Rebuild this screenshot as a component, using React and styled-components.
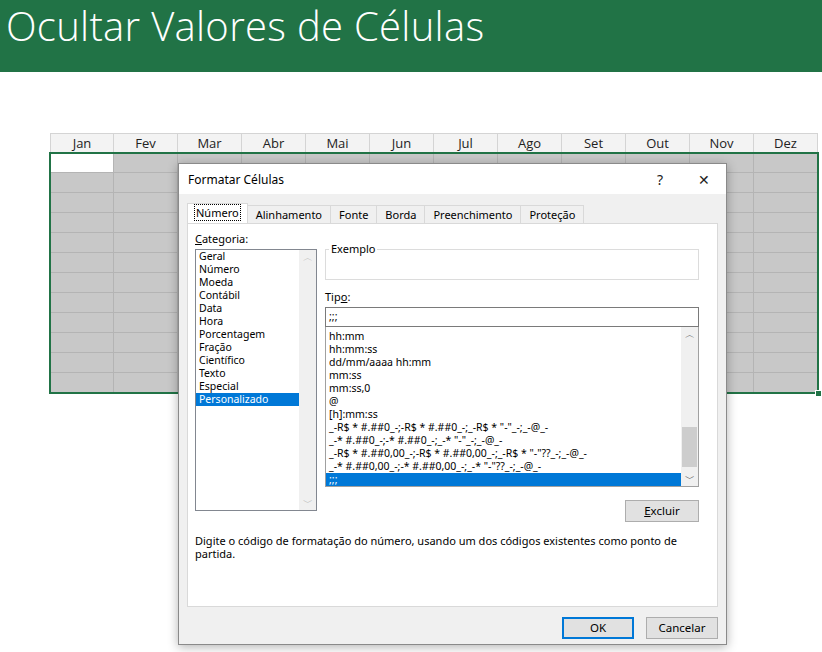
import React from "react";
import styled, { createGlobalStyle } from "styled-components";

const G = createGlobalStyle`
  body { margin:0; background:#fff; font-family:"Noto Sans", sans-serif; }
`;
const Page = styled.div`position:relative;width:822px;height:652px;overflow:hidden;background:#fff;`;
const Header = styled.div`
  height:72px;background:#217346;color:#fff;font-family:"Open Sans",sans-serif;font-weight:300;
  font-size:40px;line-height:52px;padding-left:6px;letter-spacing:0.3px;
`;
const Sheet = styled.div`margin:61px 0 0 50px;width:768px;`;
const HeadRow = styled.div`display:grid;grid-template-columns:repeat(12,64px);height:19px;background:#f3f3f3;border-top:1px solid #d4d4d4;`;
const HeadCell = styled.div`
  border-right:1px solid #d4d4d4;border-left:${p=>p.first?"1px solid #d4d4d4":"0"};
  font-size:13px;color:#222;text-align:center;line-height:19px;font-family:"Open Sans",sans-serif;
`;
const Grid = styled.div`
  display:grid;grid-template-columns:repeat(12,64px);grid-auto-rows:20px;
  outline:2px solid #217346;outline-offset:-1px;position:relative;
`;
const Cell = styled.div`
  background:${p=>p.white?"#fff":"#c8c8c8"};border-right:1px solid #b4b4b4;border-bottom:1px solid #b4b4b4;box-sizing:border-box;
`;
const Handle = styled.div`position:absolute;right:-4px;bottom:-4px;width:5px;height:5px;background:#217346;border:1px solid #fff;`;

const Dialog = styled.div`
  position:absolute;left:178px;top:163px;width:547px;height:480px;background:#f0f0f0;
  border:1px solid #8a8a8a;box-shadow:0 2px 10px rgba(0,0,0,.3);font-size:10.5px;color:#000;
  display:flex;flex-direction:column;
`;
const TitleBar = styled.div`height:30px;background:#fff;display:flex;align-items:center;padding-left:9px;font-size:12px;`;
const TitleText = styled.div`flex:1;`;
const TitleBtn = styled.div`width:44px;text-align:center;font-size:14px;color:#222;`;
const Tabs = styled.div`display:flex;margin:10px 0 0 8px;height:19px;align-items:flex-end;font-size:11px;`;
const Tab = styled.div`
  height:${p=>p.active?"20px":"18px"};padding:0 7px;line-height:18px;box-sizing:border-box;
  border:1px solid #d9d9d9;border-bottom:none;background:${p=>p.active?"#fff":"#f0f0f0"};
  margin-right:-1px;position:relative;z-index:${p=>p.active?2:1};
  span{outline:${p=>p.active?"1px dotted #000":"none"};padding:0 1px;}
`;
const Panel = styled.div`
  margin:0 8px 0 8px;height:384px;background:#fff;border:1px solid #d9d9d9;box-sizing:border-box;
  padding:8px 19px 0 7px;position:relative;
`;
const Cols = styled.div`display:grid;grid-template-columns:122px 374px;gap:8px;`;
const Label = styled.div`height:16px;line-height:14px;margin-bottom:1px;font-size:11px;u{text-decoration:underline;}`;
const ListBox = styled.div`
  border:1px solid #828790;height:262px;box-sizing:border-box;display:flex;
`;
const Items = styled.div`flex:1;padding-top:0;overflow:hidden;`;
const Item = styled.div`
  height:13px;line-height:13px;padding-left:3px;white-space:nowrap;
  background:${p=>p.sel?"#0078d7":"transparent"};color:${p=>p.sel?"#fff":"#000"};
`;
const Scroll = styled.div`width:17px;background:#f0f0f0;display:flex;flex-direction:column;justify-content:space-between;align-items:center;color:${p=>p.dim?"#bbb":"#555"};font-size:10px;position:relative;`;
const Thumb = styled.div`position:absolute;left:1px;right:1px;top:${p=>p.top}px;height:${p=>p.h}px;background:#cdcdcd;`;
const Fieldset = styled.div`
  border:1px solid #dcdcdc;height:31px;box-sizing:border-box;position:relative;margin-top:17px;
`;
const Legend = styled.span`position:absolute;top:-9px;left:3px;background:#fff;padding:0 2px;font-size:11px;`;
const Input = styled.div`border:1px solid #7a7a7a;height:20px;box-sizing:border-box;padding-left:3px;line-height:17px;`;
const Button = styled.div`
  width:${p=>p.w||72}px;height:22px;box-sizing:border-box;background:#e1e1e1;
  border:${p=>p.def?"2px solid #0078d7":"1px solid #adadad"};
  text-align:center;line-height:${p=>p.def?18:20}px;font-size:11.5px;
  u{text-decoration:underline;}
`;
const RightAlign = styled.div`display:flex;justify-content:flex-end;margin-top:13px;`;
const Desc = styled.div`margin-top:12px;width:500px;line-height:13px;font-size:11px;`;
const Footer = styled.div`display:flex;justify-content:flex-end;gap:12px;padding:10px 8px 0 0;`;

const months=["Jan","Fev","Mar","Abr","Mai","Jun","Jul","Ago","Set","Out","Nov","Dez"];
const cats=["Geral","Número","Moeda","Contábil","Data","Hora","Porcentagem","Fração","Científico","Texto","Especial","Personalizado"];
const types=["hh:mm","hh:mm:ss","dd/mm/aaaa hh:mm","mm:ss","mm:ss,0","@","[h]:mm:ss",
'_-R$ * #.##0_-;-R$ * #.##0_-;_-R$ * "-"_-;_-@_-','_-* #.##0_-;-* #.##0_-;_-* "-"_-;_-@_-',
'_-R$ * #.##0,00_-;-R$ * #.##0,00_-;_-R$ * "-"??_-;_-@_-','_-* #.##0,00_-;-* #.##0,00_-;_-* "-"??_-;_-@_-',';;;'];

export default function App(){
  return <Page><G/>
    <Header>Ocultar Valores de Células</Header>
    <Sheet>
      <HeadRow>{months.map((m,i)=><HeadCell key={m} first={i===0}>{m}</HeadCell>)}</HeadRow>
      <Grid>{Array.from({length:144}).map((_,i)=><Cell key={i} white={i===0}/>)}<Handle/></Grid>
    </Sheet>
    <Dialog>
      <TitleBar><TitleText>Formatar Células</TitleText><TitleBtn>?</TitleBtn><TitleBtn>✕</TitleBtn></TitleBar>
      <Tabs>
        <Tab active><span>Número</span></Tab><Tab><span>Alinhamento</span></Tab><Tab><span>Fonte</span></Tab>
        <Tab><span>Borda</span></Tab><Tab><span>Preenchimento</span></Tab><Tab><span>Proteção</span></Tab>
      </Tabs>
      <Panel>
        <Cols>
          <div>
            <Label><u>C</u>ategoria:</Label>
            <ListBox>
              <Items>{cats.map((c,i)=><Item key={c} sel={i===11}>{c}</Item>)}</Items>
              <Scroll dim><span>︿</span><span>﹀</span></Scroll>
            </ListBox>
          </div>
          <div>
            <Fieldset><Legend>Exemplo</Legend></Fieldset>
            <Label style={{marginTop:10}}>Tip<u>o</u>:</Label>
            <Input>;;;</Input>
            <ListBox style={{height:160,borderColor:"#a0a0a0",borderTop:"none"}}>
              <Items style={{paddingTop:3}}>{types.map((t,i)=><Item key={i} sel={i===11}>{t}</Item>)}</Items>
              <Scroll><span>︿</span><Thumb top={100} h={40}/><span>﹀</span></Scroll>
            </ListBox>
            <RightAlign><Button w={74}><u>E</u>xcluir</Button></RightAlign>
          </div>
        </Cols>
        <Desc>Digite o código de formatação do número, usando um dos códigos existentes como ponto de partida.</Desc>
      </Panel>
      <Footer><Button def>OK</Button><Button>Cancelar</Button></Footer>
    </Dialog>
  </Page>;
}
